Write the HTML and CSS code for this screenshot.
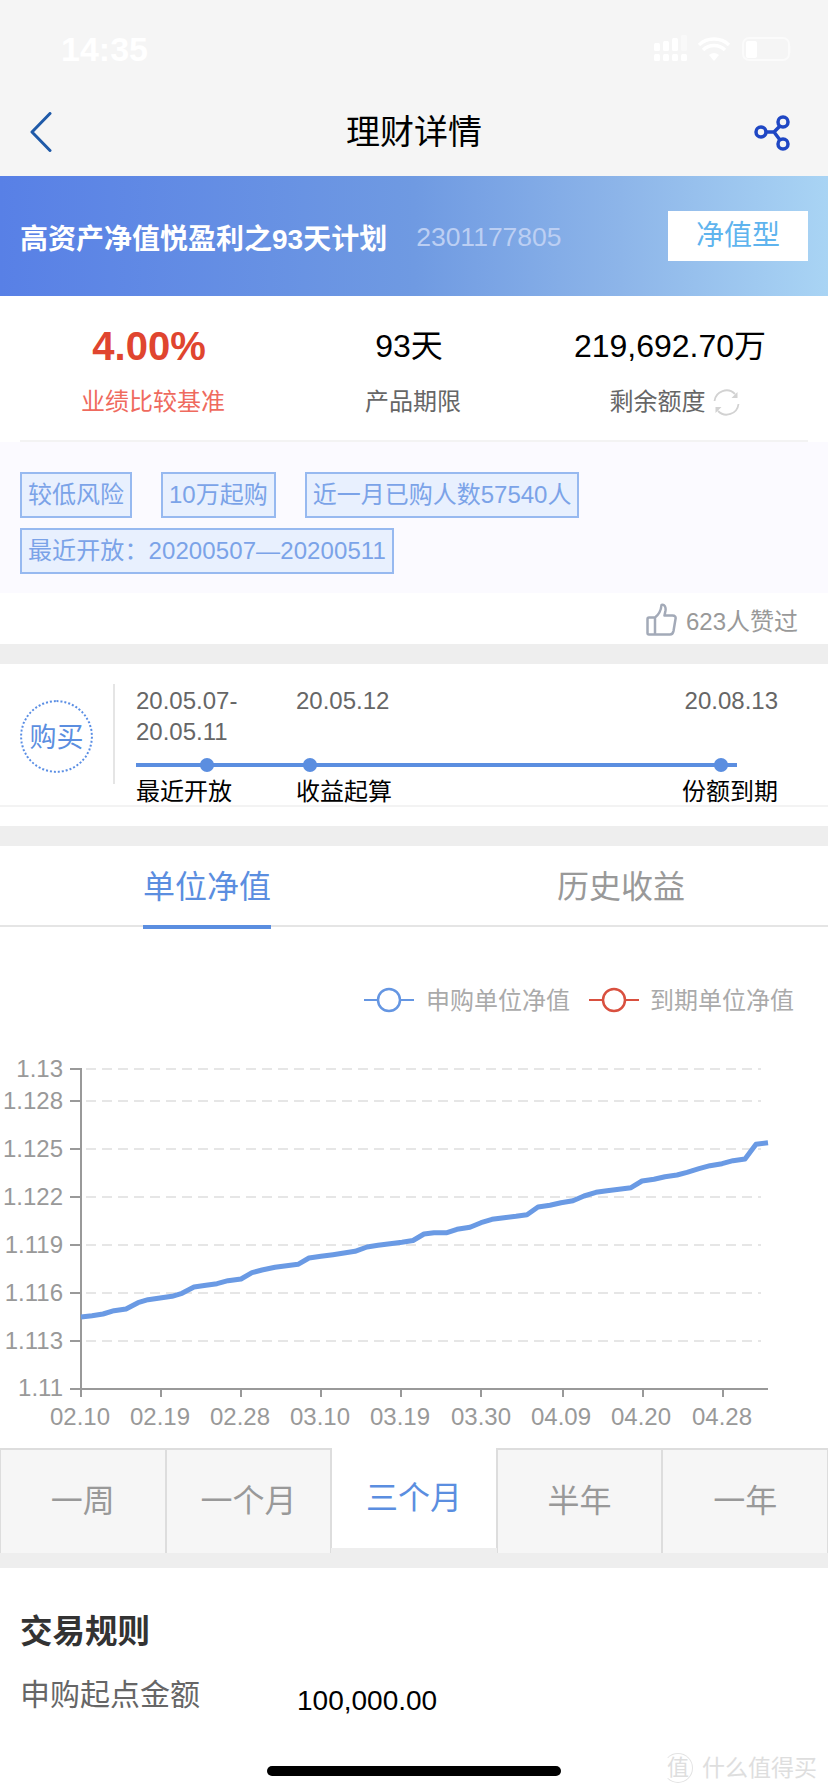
FILE: index.html
```html
<!DOCTYPE html>
<html lang="zh-CN">
<head>
    <meta charset="UTF-8">
    <meta name="viewport" content="width=device-width, initial-scale=1.0">
    <title>理财详情</title>
    <link rel="stylesheet" href="styles.css">
</head>
<body>
<div class="page">
    <header class="top">
        <div class="status">
            <span class="time">14:35</span>
            <svg class="status-icons" width="137" height="26" viewBox="653 35 137 26">
                <g fill="#fff">
                    <rect x="653" y="43" width="6" height="8" rx="1.5"/>
                    <rect x="662" y="41" width="6" height="10" rx="1.5"/>
                    <rect x="671" y="38" width="6" height="13" rx="1.5"/>
                    <rect x="680" y="35" width="6" height="16" rx="1.5" opacity=".45"/>
                    <rect x="653" y="54" width="6" height="7" rx="1.5"/>
                    <rect x="662" y="54" width="6" height="7" rx="1.5"/>
                    <rect x="671" y="54" width="6" height="7" rx="1.5"/>
                    <rect x="680" y="54" width="6" height="7" rx="1.5"/>
                    <path d="M713 61l-5-6a8 8 0 0 1 10 0z"/>
                    <rect x="745" y="41" width="11" height="17" rx="2"/>
                    <path d="M791 46v7" stroke="#fff" stroke-width="3" opacity=".5"/>
                </g>
                <g fill="none" stroke="#fff">
                    <path d="M702 50a16 16 0 0 1 22 0" stroke-width="3.5"/>
                    <path d="M698 45a22 22 0 0 1 30 0" stroke-width="3.5"/>
                    <rect x="742" y="38" width="46" height="22" rx="6" stroke-width="2" opacity=".6"/>
                </g>
            </svg>
        </div>
        <nav class="nav">
            <svg class="back" width="22" height="40" viewBox="0 0 22 40"><path d="M20 1.500L2 20l18 18.500" fill="none" stroke="#1f5aa8" stroke-width="3" stroke-linecap="round" stroke-linejoin="round"/></svg>
            <h1 class="nav-title">理财详情</h1>
            <svg class="share" width="36" height="36" viewBox="0 0 36 36">
                <g fill="none" stroke="#1f47c4" stroke-width="3.500">
                    <circle cx="7" cy="17" r="5"/>
                    <circle cx="29" cy="7" r="5"/>
                    <circle cx="29" cy="29" r="5"/>
                    <path d="M12 17h9M20 17l6-6M20 17l6 8"/>
                </g>
            </svg>
        </nav>
    </header>

    <section class="banner">
        <span class="banner-name">高资产净值悦盈利之93天计划</span>
        <span class="banner-code">2301177805</span>
        <span class="banner-type">净值型</span>
    </section>

    <section class="stats">
        <div class="stat">
            <div class="stat-value stat-rate">4.00%</div>
            <div class="stat-label stat-label-red">业绩比较基准</div>
        </div>
        <div class="stat">
            <div class="stat-value stat-days">93天</div>
            <div class="stat-label">产品期限</div>
        </div>
        <div class="stat">
            <div class="stat-value">219,692.70万</div>
            <div class="stat-label stat-label-side">剩余额度
                <svg class="refresh" width="27" height="27" viewBox="0 0 27 27">
                    <g fill="none" stroke="#d2d2d2" stroke-width="1.800">
                        <path d="M1.500 12A12 12 0 0 1 22 5"/>
                        <path d="M25.500 15A12 12 0 0 1 5 22"/>
                    </g>
                    <path d="M24.500 3v6h-6zM2.500 24v-6h6z" fill="#d2d2d2"/>
                </svg>
            </div>
        </div>
    </section>
    <div class="rule"></div>

    <section class="tags">
        <span class="tag">较低风险</span>
        <span class="tag">10万起购</span>
        <span class="tag">近一月已购人数57540人</span>
        <span class="tag tag-wide">最近开放：20200507—20200511</span>
    </section>

    <div class="likes">
        <svg width="31" height="33" viewBox="0 0 31 33">
            <path d="M9 14.500h-6a1.500 1.500 0 0 0-1.500 1.500v14a1.500 1.500 0 0 0 1.500 1.500h6zM9 14.500c4-3 6-7 6.500-12.500 3-1 4.500 2 4 5.500l-1 5h8c2.500 0 3.500 1.500 3 3.500l-2 12c-.4 2-1.500 3.500-3.500 3.500H9" fill="none" stroke="#a3aab8" stroke-width="2.500" stroke-linejoin="round"/>
        </svg>
        <span>623人赞过</span>
    </div>
    <div class="band"></div>

    <section class="buy">
        <div class="buy-side"><span class="buy-btn">购买</span></div>
        <div class="timeline">
            <div class="tl-row tl-dates">
                <span>20.05.07-<br>20.05.11</span>
                <span>20.05.12</span>
                <span class="tl-end">20.08.13</span>
            </div>
            <div class="tl-track">
                <i class="tl-dot tl-dot-open"></i>
                <i class="tl-dot tl-dot-start"></i>
                <i class="tl-dot tl-dot-end"></i>
            </div>
            <div class="tl-row tl-labels">
                <span>最近开放</span>
                <span>收益起算</span>
                <span class="tl-end">份额到期</span>
            </div>
        </div>
    </section>
    <div class="buy-foot"></div>
    <div class="band"></div>

    <div class="tabs">
        <div class="tab"><span class="tab-label tab-active">单位净值</span></div>
        <div class="tab"><span class="tab-label">历史收益</span></div>
    </div>

    <svg class="chart" width="828" height="521" viewBox="0 927 828 521">
        <g class="legend">
            <path d="M364 1000h50" stroke="#6596e2" stroke-width="2"/>
            <circle cx="389" cy="1000" r="11" fill="#fff" stroke="#6596e2" stroke-width="2.500"/>
            <text x="426" y="1009">申购单位净值</text>
            <path d="M589 1000h50" stroke="#d9503f" stroke-width="2"/>
            <circle cx="614" cy="1000" r="11" fill="#fff" stroke="#d9503f" stroke-width="2.500"/>
            <text x="650" y="1009">到期单位净值</text>
        </g>
        <g stroke="#e6e6e6" stroke-width="2" stroke-dasharray="10 6">
            <path d="M86 1069H761M86 1101H761M86 1149H761M86 1197H761M86 1245H761M86 1293H761M86 1341H761"/>
        </g>
        <g stroke="#999" stroke-width="2" fill="none">
            <path d="M81 1068V1397M80 1389H768"/>
            <path d="M70 1069h11M70 1101h11M70 1149h11M70 1197h11M70 1245h11M70 1293h11M70 1341h11M70 1389h11"/>
            <path d="M161 1389v8M241 1389v8M321 1389v8M401 1389v8M481 1389v8M563 1389v8M643 1389v8M723 1389v8"/>
        </g>
        <g class="axis-y">
            <text x="63" y="1077">1.13</text>
            <text x="63" y="1109">1.128</text>
            <text x="63" y="1157">1.125</text>
            <text x="63" y="1205">1.122</text>
            <text x="63" y="1253">1.119</text>
            <text x="63" y="1301">1.116</text>
            <text x="63" y="1349">1.113</text>
            <text x="63" y="1396">1.11</text>
        </g>
        <g class="axis-x">
            <text x="80" y="1425">02.10</text>
            <text x="160" y="1425">02.19</text>
            <text x="240" y="1425">02.28</text>
            <text x="320" y="1425">03.10</text>
            <text x="400" y="1425">03.19</text>
            <text x="481" y="1425">03.30</text>
            <text x="561" y="1425">04.09</text>
            <text x="641" y="1425">04.20</text>
            <text x="722" y="1425">04.28</text>
        </g>
        <polyline fill="none" stroke="#6a9ae4" stroke-width="5" stroke-linejoin="round"
            points="81,1317 92,1315.700 103,1314 114,1310.700 126,1309 138,1302.700 148,1299.700 160,1298 172,1296.300 182,1293.300 194,1287 206,1285.300 217,1283.700 228,1280.700 241,1279 252,1272.700 262,1270 275,1267.300 298,1264.300 309,1258 321,1256.300 333,1254.700 344,1253 355,1251.300 367,1247 378,1245.300 390,1243.700 402,1242.300 413,1240.500 424,1234 434,1232.700 447,1232.700 457,1229.300 470,1227.300 481,1222.700 492,1219.300 504,1217.700 516,1216.300 527,1214.700 538,1207 550,1205.300 561,1202.700 573,1200.700 584,1196 596,1192.300 607,1190.700 619,1189.300 631,1187.700 642,1181 654,1179.300 665,1176.700 677,1175 687,1172.300 699,1168.700 710,1165.700 722,1163.700 733,1160.700 745,1159 756,1144.300 768,1142.700"/>
    </svg>

    <div class="periods">
        <div class="period">一周</div>
        <div class="period">一个月</div>
        <div class="period period-active">三个月</div>
        <div class="period">半年</div>
        <div class="period">一年</div>
    </div>
    <div class="band band-thin"></div>

    <section class="rules">
        <h2 class="rules-title">交易规则</h2>
        <div class="rules-row">
            <span class="rules-key">申购起点金额</span>
            <span class="rules-val">100,000.00</span>
        </div>
    </section>

    <div class="home-bar"></div>
    <div class="watermark"><span class="wm-mark">值</span><span>什么值得买</span></div>
</div>
</body>
</html>
```

FILE: styles.css
```css
* { box-sizing: border-box; }
body { margin: 0; background: #fff; font-family: "Liberation Sans", "Noto Sans CJK SC", sans-serif; color: #000; }
.page { position: relative; width: 828px; height: 1792px; overflow: hidden; background: #fff; }

/* top bar */
.top { height: 176px; background: #f5f5f5; }
.status { height: 88px; display: flex; justify-content: space-between; padding: 34px 37px 0 61px; }
.time { font-size: 34px; line-height: 30px; font-weight: 700; color: #fff; }
.status-icons { margin-top: 1px; }
.nav { height: 88px; display: grid; grid-template-columns: 1fr auto 1fr; align-items: center; padding: 0 38px; }
.back { margin-left: -8px; }
.nav-title { margin: 0; font-size: 34px; line-height: 44px; font-weight: 400; }
.share { justify-self: end; margin-top: 2px; }

/* banner */
.banner { height: 120px; display: flex; align-items: center; padding: 2px 20px 0 20px; background: linear-gradient(90deg, #5880e6 0%, #6f9ae2 50%, #8db5e9 75%, #a9d4f4 100%); }
.banner-name { font-size: 28px; font-weight: 700; color: #fff; }
.banner-code { margin-left: 29px; font-size: 26.500px; color: #bccff3; }
.banner-type { width: 140px; height: 50px; margin: -2px 0 0 auto; background: #fff; color: #5fb4ee; font-size: 28px; line-height: 50px; text-align: center; }

/* stats */
.stats { height: 144px; display: grid; grid-template-columns: 296px 234px 280px; padding-top: 22px; }
.stat { text-align: center; }
.stat-value { font-size: 32px; line-height: 56px; }
.stat-rate { margin-left: 2px; font-size: 40px; font-weight: 700; color: #e0452f; }
.stat-days { margin-right: 8px; }
.stat-label { margin-top: 8px; font-size: 24px; line-height: 40px; color: #666; display: flex; justify-content: center; align-items: center; gap: 7px; }
.stat-label-red { margin-left: 10px; color: #ef6a5e; }
.stat-label-side { margin-left: 9px; }
.refresh { flex: none; }
.rule { height: 2px; margin: 0 20px; background: #f3f3f3; }

/* tags */
.tags { height: 151px; display: flex; flex-wrap: wrap; align-content: flex-start; gap: 10px 29px; padding: 30px 20px 0; background: #fbfaff; }
.tag { height: 46px; padding: 0 6px; border: 2px solid #97b9f0; background: #e8f0fe; color: #7ba3e8; font-size: 24px; line-height: 42px; }
.tag-wide { letter-spacing: .1px; }

.likes { height: 51px; display: flex; justify-content: flex-end; align-items: center; gap: 9px; padding: 2px 30px 0 0; color: #999; font-size: 24px; }
.band { height: 20px; background: #eee; }
.band-thin { height: 18px; }

/* buy timeline */
.buy { height: 141px; display: flex; padding-top: 20px; }
.buy-side { width: 115px; height: 100px; padding: 4px 0 0 20px; border-right: 2px solid #e5e5e5; display: flex; align-items: center; }
.buy-btn { width: 73px; height: 73px; border: 2px dotted #5a8ee4; border-radius: 50%; color: #5b8ee0; font-size: 27px; line-height: 72px; text-align: center; white-space: nowrap; }
.timeline { width: 642px; margin-left: 21px; }
.tl-row { display: grid; grid-template-columns: 160px 1fr auto; font-size: 24px; line-height: 32px; }
.tl-dates { height: 64px; padding-top: 1px; line-height: 31px; color: #666; }
.tl-labels { margin-top: 9px; color: #000; }
.tl-track { position: relative; width: 601px; height: 4px; margin-top: 15px; background: #5b8ee0; }
.tl-dot { position: absolute; top: -5px; width: 14px; height: 14px; border-radius: 50%; background: #5b8ee0; }
.tl-dot-open { left: 64px; }
.tl-dot-start { left: 167px; }
.tl-dot-end { left: 578px; }
.buy-foot { height: 21px; border-top: 2px solid #f3f3f3; }

/* tabs */
.tabs { height: 81px; display: flex; border-bottom: 2px solid #e5e5e5; }
.tab { flex: 1; padding-top: 20px; text-align: center; }
.tab-label { display: inline-block; font-size: 32px; line-height: 42px; color: #999; }
.tab-active { padding-bottom: 17px; border-bottom: 4px solid #5b8ee0; color: #5b8ee0; }

/* chart */
.chart { display: block; }
.chart text { font-size: 24px; fill: #999; }
.legend text { fill: #aaa; }
.axis-y text { text-anchor: end; }
.axis-x text { text-anchor: middle; }

/* period switch */
.periods { height: 102px; display: grid; grid-template-columns: repeat(5, 1fr); background: #eee; }
.period { border-top: 2px solid #ddd; border-left: 1px solid #ddd; border-right: 1px solid #ddd; background: #f6f6f6; color: #999; font-size: 32px; line-height: 103px; text-align: center; }
.period-active { height: 100px; border-top: 0; background: #fff; color: #5b8ee0; line-height: 101px; }

/* rules */
.rules { padding: 42px 20px 0; }
.rules-title { margin: 0; font-size: 32.500px; line-height: 44px; font-weight: 700; color: #333; }
.rules-row { display: flex; margin-top: 19px; }
.rules-key { width: 277px; font-size: 30px; line-height: 44px; color: #666; }
.rules-val { font-size: 28px; line-height: 56px; }

/* overlays */
.home-bar { position: absolute; left: 267px; top: 1766px; width: 294px; height: 10px; border-radius: 5px; background: #000; }
.watermark { position: absolute; left: 663px; top: 1753px; display: flex; align-items: center; gap: 9px; color: #dedede; font-size: 23px; line-height: 29px; white-space: nowrap; }
.wm-mark { width: 30px; height: 30px; border: 1px solid #e3e3e3; border-left-color: transparent; border-radius: 50%; text-align: center; line-height: 28px; font-size: 22px; }
```
